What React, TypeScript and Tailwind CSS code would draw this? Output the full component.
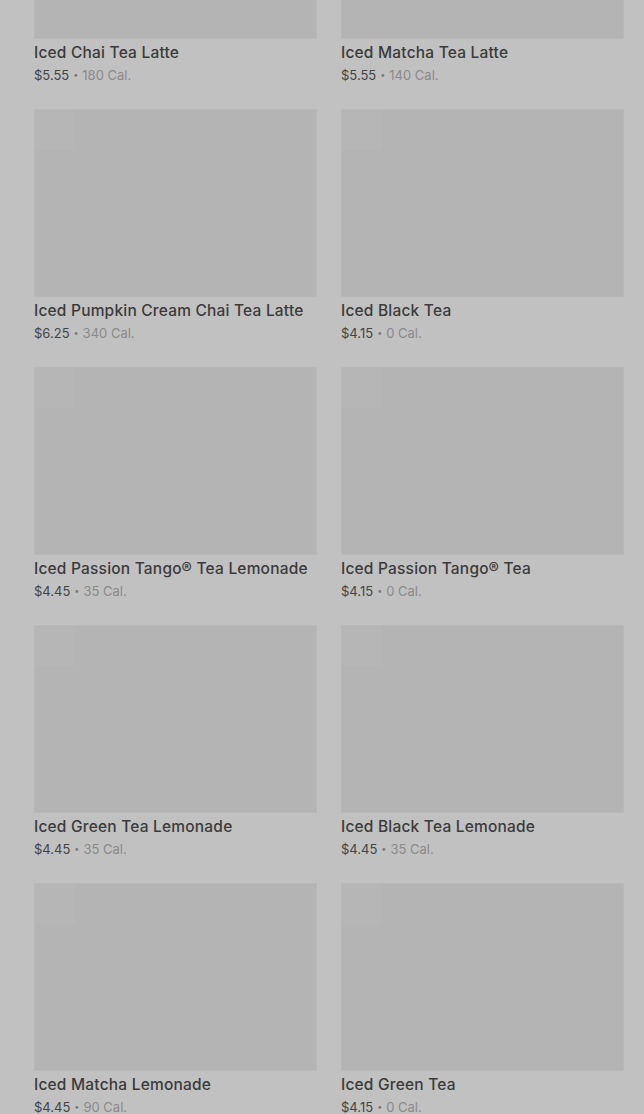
import React from 'react';

const ITEMS = [
  { name: 'Iced Chai Tea Latte', price: '$5.55', cal: '180 Cal.' },
  { name: 'Iced Matcha Tea Latte', price: '$5.55', cal: '140 Cal.' },
  { name: 'Iced Pumpkin Cream Chai Tea Latte', price: '$6.25', cal: '340 Cal.' },
  { name: 'Iced Black Tea', price: '$4.15', cal: '0 Cal.' },
  { name: 'Iced Passion Tango® Tea Lemonade', price: '$4.45', cal: '35 Cal.' },
  { name: 'Iced Passion Tango® Tea', price: '$4.15', cal: '0 Cal.' },
  { name: 'Iced Green Tea Lemonade', price: '$4.45', cal: '35 Cal.' },
  { name: 'Iced Black Tea Lemonade', price: '$4.45', cal: '35 Cal.' },
  { name: 'Iced Matcha Lemonade', price: '$4.45', cal: '90 Cal.' },
  { name: 'Iced Green Tea', price: '$4.15', cal: '0 Cal.' },
];

function ProductCard({ name, price, cal }: { name: string; price: string; cal: string }) {
  return (
    <div className="flex flex-col">
      {/* image placeholder */}
      <div className="relative h-[188px] w-full bg-[#b4b4b4] border border-[#b8b8b8]">
        <div className="absolute left-0 top-0 h-[40px] w-[40px] bg-[#b6b6b6]" />
      </div>
      <div className="mt-[3px] text-[15.5px] leading-[22px] font-medium tracking-[0.2px] text-[#3b3b3b] whitespace-nowrap">
        {name}
      </div>
      <div className="mt-[2px] flex items-center text-[13px] leading-[18px] whitespace-nowrap">
        <span className="text-[#444444]">{price}</span>
        <span className="mx-[4px] text-[9px] text-[#7a7a7a]">•</span>
        <span className="text-[#8a8a8a]">{cal}</span>
      </div>
    </div>
  );
}

export default function App() {
  return (
    <div
      className="h-[1114px] w-[644px] overflow-hidden bg-[#c1c1c1]"
      style={{ fontFamily: 'Inter, "Noto Sans", sans-serif' }}
    >
      <div className="-mt-[149px] grid grid-cols-[283px_283px] gap-x-[24px] gap-y-[25px] pl-[34px]">
        {ITEMS.map((it) => (
          <ProductCard key={it.name} {...it} />
        ))}
      </div>
    </div>
  );
}
